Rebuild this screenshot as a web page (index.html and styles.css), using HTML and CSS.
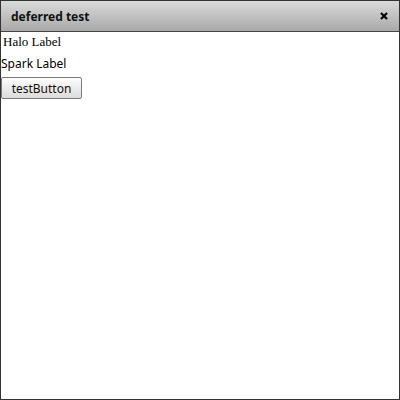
FILE: index.html
```html
<!DOCTYPE html>
<html>
<head>
<meta charset="utf-8">
<link rel="stylesheet" href="styles.css">
</head>
<body>
<div class="window">
  <div class="titlebar">
    <span class="title">deferred test</span>
    <svg class="close" width="8" height="8" viewBox="0 0 8 8"><path d="M1 1L7 7M7 1L1 7" stroke="#000" stroke-width="2.2"/></svg>
  </div>
  <div class="content">
    <div class="halo">Halo Label</div>
    <div class="spark">Spark Label</div>
    <button class="btn">testButton</button>
  </div>
</div>
</body>
</html>
```
FILE: styles.css
```css
html, body { margin: 0; padding: 0; background: #fff; }
.window {
  width: 400px; height: 400px; box-sizing: border-box;
  border: 1px solid #333; display: flex; flex-direction: column;
  background: #fff;
}
.titlebar {
  height: 31px; box-sizing: border-box; flex: none;
  background: linear-gradient(#dadada, #a9a9a9);
  border-bottom: 1px solid #444;
  display: flex; align-items: center; justify-content: space-between;
  padding: 0 11px 0 10px;
}
.title { font-family: "Noto Sans", sans-serif; font-weight: bold; font-size: 12px; color: #111; }
.close { display: block; }
.content { display: flex; flex-direction: column; align-items: flex-start; }
.halo { font-family: "Liberation Serif", serif; font-size: 13px; margin: 2px 0 0 2px; line-height: 16px; color: #000; }
.spark { font-family: "Noto Sans", sans-serif; font-size: 12px; margin: 5px 0 0 0; line-height: 17px; color: #000; }
.btn {
  margin-top: 5px; width: 81px; height: 22px; box-sizing: border-box;
  font-family: "Noto Sans", sans-serif; font-size: 12px; color: #111;
  background: linear-gradient(#fdfdfd, #dcdcdc);
  border: 1px solid #7a7a7a; border-radius: 2px; padding: 0;
}
```
